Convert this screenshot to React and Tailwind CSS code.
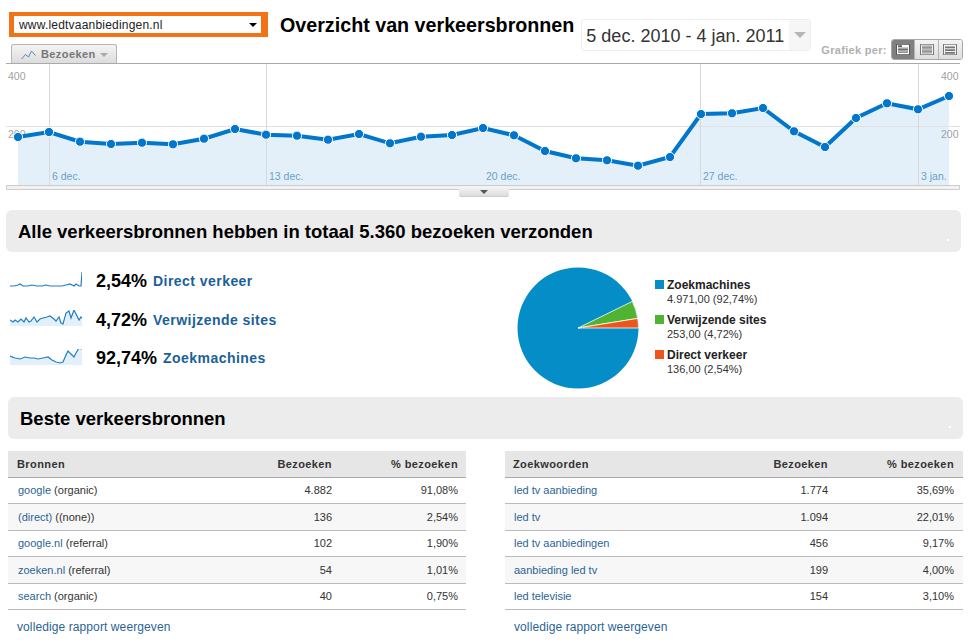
import React from 'react';

const POINTS = [
  [18, 137], [49, 132], [80, 141.7], [111, 144], [142, 142.7], [173, 144.3], [204, 138.7], [235, 129],
  [266, 134.7], [297, 135.7], [328, 139.7], [359, 134], [390, 143.3], [421, 136.7], [452, 135], [483, 128],
  [514, 135.3], [545, 151], [576, 158.3], [607, 160.3], [638, 165.7], [670, 157], [701, 114], [732, 113.3],
  [763, 108], [794, 131.3], [825, 147], [856, 118], [887, 103.3], [918, 109.3], [949, 96],
];

const SOURCES = [
  { name: 'google', extra: ' (organic)', visits: '4.882', pct: '91,08%' },
  { name: '(direct)', extra: ' ((none))', visits: '136', pct: '2,54%' },
  { name: 'google.nl', extra: ' (referral)', visits: '102', pct: '1,90%' },
  { name: 'zoeken.nl', extra: ' (referral)', visits: '54', pct: '1,01%' },
  { name: 'search', extra: ' (organic)', visits: '40', pct: '0,75%' },
];

const KEYWORDS = [
  { name: 'led tv aanbieding', visits: '1.774', pct: '35,69%' },
  { name: 'led tv', visits: '1.094', pct: '22,01%' },
  { name: 'led tv aanbiedingen', visits: '456', pct: '9,17%' },
  { name: 'aanbieding led tv', visits: '199', pct: '4,00%' },
  { name: 'led televisie', visits: '154', pct: '3,10%' },
];

const SPARKS = [
  {
    pct: '2,54%',
    label: 'Direct verkeer',
    fill: false,
    box: '0 0 72 18',
    line: '0,15 4,15 8,14 10,13 13,15 18,15 22,14 27,15 32,15 36,14 40,15 46,15 52,15 56,14 60,13 64,15 66,13 69,15 71,15 72,1',
  },
  {
    pct: '4,72%',
    label: 'Verwijzende sites',
    fill: true,
    box: '0 3 72 18',
    bottom: 19,
    line: '0,13 3,15 5,13 8,15 11,12 14,15 16,11 19,15 21,14 24,10 27,15 30,12 33,11 37,10 40,9 44,12 46,14 49,10 51,16 53,17 56,6 59,4 61,11 64,3 67,9 69,13 71,10 72,11',
  },
  {
    pct: '92,74%',
    label: 'Zoekmachines',
    fill: true,
    box: '0 4 72 18',
    bottom: 20,
    line: '0,11 5,13 10,14 15,12 20,13 24,13 28,14 33,13 38,12 42,15 46,17 50,18 53,17 56,10 58,6 61,9 64,12 66,8 69,3 72,4',
  },
];

const LEGEND = [
  { color: 'bg-[#058dc7]', label: 'Zoekmachines', value: '4.971,00 (92,74%)' },
  { color: 'bg-[#50b432]', label: 'Verwijzende sites', value: '253,00 (4,72%)' },
  { color: 'bg-[#ed561b]', label: 'Direct verkeer', value: '136,00 (2,54%)' },
];

const TrafficChart = () => {
  const line = POINTS.map((p) => p.join(',')).join(' ');
  const labels = [[52, '6 dec.'], [269, '13 dec.'], [486, '20 dec.'], [703, '27 dec.'], [921, '3 jan.']];
  return (
    <svg width="969" height="121" viewBox="0 64 969 121" className="block">
      <polygon points={`18,185 ${line} 949,185`} fill="#e3f0f9" />
      <line x1="6" y1="126.5" x2="960" y2="126.5" stroke="#e2e2e2" />
      {[49.5, 266.5, 700.5, 918.5].map((x) => (
        <line key={x} x1={x} y1="64" x2={x} y2="185" stroke="#d8d8d8" />
      ))}
      <g fontFamily="'Liberation Sans', sans-serif" fontSize="10.5" fill="#a0a0a0">
        <text x="8" y="80">400</text>
        <text x="8" y="138">200</text>
        <text x="941" y="80">400</text>
        <text x="941" y="138">200</text>
      </g>
      <g fontFamily="'Liberation Sans', sans-serif" fontSize="10.5" fill="#6a9fc8">
        {labels.map(([x, t]) => (
          <text key={t} x={x} y="180">{t}</text>
        ))}
      </g>
      <polyline points={line} fill="none" stroke="#0077cc" strokeWidth="4" />
      {POINTS.map(([x, y]) => (
        <circle key={x} cx={x} cy={y} r="4.6" fill="#0077cc" stroke="#ffffff" strokeWidth="1" />
      ))}
    </svg>
  );
};

const ViewIcon = ({ kind, active }) => {
  const stroke = active ? '#555' : '#777';
  const ys = kind === 0 ? [6, 8, 10, 12] : kind === 1 ? [3, 5, 7, 9, 11, 13] : [5, 9, 13];
  return (
    <svg width="14" height="11" viewBox="0 0 14 16" preserveAspectRatio="none" className="block">
      <rect x="0.5" y="0.5" width="13" height="15" fill={active ? '#fff' : '#f2f2f2'} stroke={stroke} />
      {kind === 0 && <rect x="2" y="2" width="4" height="2" fill="#333" />}
      {ys.map((y) => (
        <line key={y} x1="2" y1={y} x2="12" y2={y} stroke={stroke} strokeWidth={kind === 2 ? 2.4 : 1} />
      ))}
    </svg>
  );
};

const Band = ({ children, className }) => (
  <div className={`relative h-[42px] pt-[2px] rounded-md bg-[#ececec] flex items-center text-[18.5px] font-bold text-black ${className}`}>
    {children}
    <span className="absolute right-[12px] top-[29px] w-[2px] h-[2px] bg-white" />
  </div>
);

const ReportTable = ({ title, rows, className, headPad, rowPad }) => (
  <div className={`w-[458px] ${className}`}>
    <div className={`h-[27px] flex items-center bg-[#e6e6e6] border-b border-[#aaaaaa] text-[11px] font-bold text-[#333] tracking-[0.4px] ${headPad}`}>
      <span className="flex-1">{title}</span>
      <span>Bezoeken</span>
      <span className="w-[126px] text-right">% bezoeken</span>
    </div>
    {rows.map((row, i) => (
      <div
        key={row.name}
        className={`h-[26.4px] flex items-center border-b border-[#bbbbbb] text-[11px] text-[#333] ${rowPad} ${i % 2 ? 'bg-[#f7f7f7]' : 'bg-white'}`}
      >
        <span className="flex-1">
          <span className="text-[#2a6496]">{row.name}</span>
          {row.extra}
        </span>
        <span>{row.visits}</span>
        <span className="w-[126px] text-right">{row.pct}</span>
      </div>
    ))}
    <div className="mt-[8px] pl-[9px] text-[12px] text-[#2a6496] tracking-[0.1px]">volledige rapport weergeven</div>
  </div>
);

const App = () => {
  return (
    <div className="w-[969px] h-[643px] overflow-hidden bg-white font-['Liberation_Sans',Arial,sans-serif]">
      {/* top bar */}
      <div className="h-[63px] flex items-start">
        <div className="w-[268px] h-[63px] flex flex-col justify-between">
          <div className="ml-[9px] mt-[12px] h-[25px] border-y-[4px] border-l-[5px] border-r-[7px] border-[#f47216] bg-white flex items-center justify-between pl-[5px] pr-1 text-[12px] tracking-[0.2px] text-[#222]">
            <span>www.ledtvaanbiedingen.nl</span>
            <span className="w-0 h-0 border-x-[4px] border-x-transparent border-t-[4px] border-t-black" />
          </div>
          <div className="ml-[11px] w-[106px] h-[19px] pt-px rounded-t-[3px] border border-b-0 border-[#b5b5b5] bg-gradient-to-b from-[#f4f4f4] to-[#dcdcdc] flex items-center pl-[9px] text-[11px] font-bold text-[#777] tracking-[0.4px]">
            <svg width="15" height="10" viewBox="0 0 15 10" className="mr-[5px]">
              <polyline points="0.5,9 4.5,4.5 7.5,7 10.5,1 14.5,5.5" fill="none" stroke="#5a86b8" strokeWidth="1" />
            </svg>
            Bezoeken
            <span className="ml-[4px] w-0 h-0 border-x-[4px] border-x-transparent border-t-[4px] border-t-[#aaaaaa]" />
          </div>
        </div>
        <h1 className="ml-[12px] mt-[12px] text-[19.7px] leading-[26px] font-bold text-black whitespace-nowrap">Overzicht van verkeersbronnen</h1>
        <div className="ml-[7px] mt-[19px] w-[230px] h-[32px] flex rounded-[3px] border border-[#eeeeee] bg-white">
          <span className="flex-1 pl-[4px] text-[18px] leading-[32px] text-[#333] whitespace-nowrap">5 dec. 2010 - 4 jan. 2011</span>
          <span className="w-[21px] bg-[#f6f6f6] flex items-center justify-center">
            <span className="w-0 h-0 border-x-[6px] border-x-transparent border-t-[6px] border-t-[#b5b5b5]" />
          </span>
        </div>
        <div className="ml-[10px] mt-[39px] flex items-center">
          <span className="text-[11px] font-bold text-[#b0b0b0] tracking-[0.3px] mr-[4px] mt-[1px] whitespace-nowrap">Grafiek per:</span>
          <div className="flex h-[21px] w-[72px] rounded-[3px] border border-[#a8a8a8] overflow-hidden">
            <span className="flex-1 flex items-center justify-center bg-[#808080]"><ViewIcon kind={0} active /></span>
            <span className="flex-1 flex items-center justify-center bg-gradient-to-b from-[#f4f4f4] to-[#dddddd] border-l border-[#b5b5b5]"><ViewIcon kind={1} /></span>
            <span className="flex-1 flex items-center justify-center bg-gradient-to-b from-[#f4f4f4] to-[#dddddd] border-l border-[#b5b5b5]"><ViewIcon kind={2} /></span>
          </div>
        </div>
      </div>

      {/* chart */}
      <div className="relative">
        <div className="ml-[6px] w-[954px] h-px bg-[#aaaaaa]" />
        <TrafficChart />
        <div className="ml-[6px] w-[954px] h-[5px] border border-[#cccccc] bg-[#f2f2f2] rounded-b-[1px]" />
        <div className="absolute left-[459px] top-[124px] w-[50px] h-[10px] bg-gradient-to-b from-[#f4f4f4] to-[#dddddd] rounded-b-[2px] border-b border-[#cccccc] flex items-center justify-center">
          <span className="w-0 h-0 border-x-[4px] border-x-transparent border-t-[4px] border-t-[#555]" />
        </div>
      </div>

      {/* totals */}
      <Band className="mt-[20px] ml-[6px] w-[955px] pl-3">Alle verkeersbronnen hebben in totaal 5.360 bezoeken verzonden</Band>
      <div className="h-[145px] flex items-start">
        <div className="w-[517px] pt-[10px] pl-[10px] flex flex-col">
          {SPARKS.map((s) => (
            <div key={s.label} className="h-[38.7px] flex items-center">
              <svg width="72" height="18" viewBox={s.box} className="block -mt-[2px]">
                {s.fill && <polygon points={`0,${s.bottom} ${s.line} 72,${s.bottom}`} fill="#e3f0f9" />}
                <polyline points={s.line} fill="none" stroke="#1f7fc4" strokeWidth="1.2" />
              </svg>
              <span className="ml-[14px] text-[18px] font-bold text-black">{s.pct}</span>
              <span className="ml-[6px] text-[14px] font-bold text-[#1c5f99] tracking-[0.45px]">{s.label}</span>
            </div>
          ))}
        </div>
        <svg width="122" height="122" viewBox="0 0 122 122" className="block mt-[15px]">
          <circle cx="61" cy="61" r="60.5" fill="#058dc7" />
          <path d="M61 61 L115.3 34.4 A60.5 60.5 0 0 1 120.7 51.4 Z" fill="#50b432" stroke="#ffffff" strokeWidth="0.8" />
          <path d="M61 61 L120.7 51.4 A60.5 60.5 0 0 1 121.5 61 Z" fill="#ed561b" stroke="#ffffff" strokeWidth="0.8" />
        </svg>
        <div className="ml-[16px] mt-[26px] flex flex-col gap-[6px]">
          {LEGEND.map((l) => (
            <div key={l.label} className="flex">
              <span className={`w-[9px] h-[9px] mt-[2px] mr-[3px] ${l.color}`} />
              <div>
                <div className="text-[12px] leading-[14px] font-bold text-[#222]">{l.label}</div>
                <div className="text-[11px] leading-[15px] text-[#333]">{l.value}</div>
              </div>
            </div>
          ))}
        </div>
      </div>

      {/* best sources */}
      <Band className="ml-[8px] w-[955px] pl-3">Beste verkeersbronnen</Band>
      <div className="mt-[12px] flex">
        <ReportTable title="Bronnen" rows={SOURCES} className="ml-[8px]" headPad="pl-[9px] pr-2" rowPad="pl-[10px] pr-2" />
        <ReportTable title="Zoekwoorden" rows={KEYWORDS} className="ml-[39px]" headPad="pl-[8px] pr-[9px]" rowPad="pl-[9px] pr-[9px]" />
      </div>
    </div>
  );
};

export default App;
